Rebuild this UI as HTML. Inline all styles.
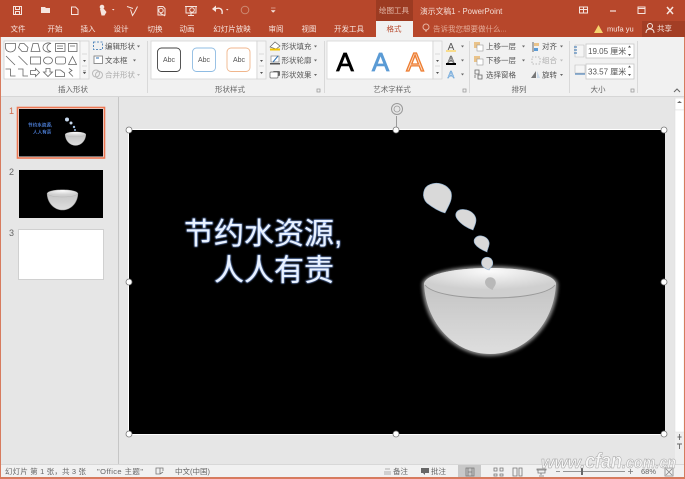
<!DOCTYPE html>
<html lang="zh"><head><meta charset="utf-8"><title>PowerPoint</title>
<style>
html,body{margin:0;padding:0;width:685px;height:479px;overflow:hidden;background:#e6e6e6}
svg{display:block;font-family:"Liberation Sans","Noto Sans CJK SC",sans-serif}
.tab{font-size:7.5px;fill:#f7e6e0;text-anchor:middle}
.r{font-size:7.5px;fill:#555}
.g{font-size:7.5px;fill:#666;text-anchor:middle}
.s{font-size:7.5px;fill:#666}
.i{fill:none;stroke:#666;stroke-width:.8}
.ic{fill:none;stroke:#f6e5df;stroke-width:1}
.wm{font-family:"Liberation Sans",sans-serif;font-style:italic;font-weight:bold;fill:#f6f6f6;stroke:#a0a0a0;stroke-width:.5}
</style></head><body>
<svg width="685" height="479" viewBox="0 0 685 479" xmlns="http://www.w3.org/2000/svg">
<defs>
<linearGradient id="bowl" x1="0" y1="0" x2="0" y2="1"><stop offset="0" stop-color="#bdbdbd"/><stop offset=".35" stop-color="#c9c9c9"/><stop offset="1" stop-color="#dedede"/></linearGradient>
<radialGradient id="rim" cx=".5" cy=".1" r=".62"><stop offset="0" stop-color="#fbfbfb"/><stop offset="1" stop-color="#cfcfcf"/></radialGradient>
<filter id="gl" x="-20%" y="-20%" width="140%" height="140%"><feGaussianBlur stdDeviation="1.5"/></filter>
<filter id="tg" x="-10%" y="-20%" width="120%" height="140%"><feGaussianBlur stdDeviation=".8"/></filter>
<g id="bw">
<path d="M-68 0C-67-11-35-18 0-18S67-11 68 0C67 42 35 72 0 72S-67 42-68 0Z" fill="#8a8a8a" filter="url(#gl)"/>
<path d="M-66 0C-65-10-35-16 0-16S65-10 66 0C64 40 35 70 0 70S-64 40-66 0Z" fill="url(#bowl)"/>
<path d="M-66 0C-65-10-35-16 0-16S65-10 66 0C58 10 30 14 0 14S-58 10-66 0Z" fill="url(#rim)"/>
<path d="M-65 1C-58 10-30 14 0 14S58 10 65 1" fill="none" stroke="#9a9a9a" stroke-width="1"/>
</g>
</defs>

<!-- title bar -->
<rect width="685" height="37" fill="#b7472b"/>
<rect x="376" y="0" width="37" height="21" fill="#9c3b22"/>
<path d="M376 21h37v16h-37z" fill="#f1f1f1"/>
<rect x="642" y="21" width="43" height="16" fill="#a33e25"/>

<!-- quick access icons -->
<path class="ic" d="M13.500 6.500h8v8h-8zM15.500 6.500v3h4v-3M15.500 14.500v-3h4v3"/>
<path d="M41 7h4l1 1h4v5H41z" fill="#f6e5df"/>
<path class="ic" d="M71.500 7h4l2.500 2.500V14.500h-6.500z"/>
<circle cx="102" cy="7" r="2.300" fill="#f6e5df"/><path d="M100 9h4l2.500 3-2 3.500h-3z" fill="#f6e5df"/><path d="M112 9h2.500l-1.250 1.500z" fill="#f6e5df"/>
<path class="ic" d="M127 6.500l6 2M137.500 6.500l-3 6-2 3-2-6"/>
<path class="ic" d="M158 6.500h5l2 2v6.500h-7zM160 13l5 3"/><circle cx="161" cy="10.500" r="2.200" fill="none" stroke="#f6e5df"/>
<path class="ic" d="M185 6.500h12M186 7v6h10V7M191 13v2M188 15.500h6"/><circle cx="192" cy="10" r="2.300" fill="none" stroke="#f6e5df"/>
<path d="M215 9c5-2 8 0 7 5" fill="none" stroke="#f6e5df" stroke-width="1.400"/><path d="M212 9l4-3.500v6.500z" fill="#f6e5df"/><path d="M226 9h2.500l-1.250 1.500z" fill="#f6e5df"/>
<circle cx="245" cy="10" r="3.800" fill="none" stroke="#cc8a73"/>
<path d="M271 8h4.500M271.200 10.500h4l-2 2z" fill="#f6e5df" stroke="#f6e5df" stroke-width=".5"/>
<text x="394" y="13" class="tab" style="fill:#e3b9aa">绘图工具</text>
<text x="420" y="14" style="font-size:7.800px;fill:#f3dcd4">演示文稿1 - PowerPoint</text>
<path class="ic" d="M579.500 7h8v6h-8zM583.500 7v6M579.500 9.500h8"/>
<path d="M610 11h6" stroke="#f6e5df" stroke-width="1.200"/>
<path class="ic" d="M638 7h7v6.500h-7zM638 8.500h7"/>
<path d="M667 7l6 7M673 7l-6 7" stroke="#f6e5df" stroke-width="1.500"/>

<!-- tabs -->
<text x="18" y="31.500" class="tab">文件</text><text x="55" y="31.500" class="tab">开始</text><text x="88" y="31.500" class="tab">插入</text>
<text x="121" y="31.500" class="tab">设计</text><text x="155" y="31.500" class="tab">切换</text><text x="187" y="31.500" class="tab">动画</text>
<text x="232" y="31.500" class="tab">幻灯片放映</text><text x="276" y="31.500" class="tab">审阅</text><text x="309" y="31.500" class="tab">视图</text>
<text x="349" y="31.500" class="tab">开发工具</text>
<text x="394" y="31.500" class="tab" style="fill:#b7472b">格式</text>
<circle cx="426" cy="27" r="3" fill="none" stroke="#e7b5a3"/><path d="M425 31h2" stroke="#e7b5a3"/>
<text x="433" y="31.500" style="font-size:7.500px;fill:#e5ad9a">告诉我您想要做什么...</text>
<path d="M594 33l4.500-8 4.500 8z" fill="#f5d36e"/>
<text x="607" y="31.500" style="font-size:7.500px;fill:#f7e6e0">mufa yu</text>
<circle cx="650" cy="26" r="2.500" fill="none" stroke="#f6e5df"/><path d="M646 33c0-3 2-4 4-4s4 1 4 4" fill="none" stroke="#f6e5df"/>
<text x="657" y="31" style="font-size:7.500px;fill:#f7e6e0">共享</text>

<!-- ribbon -->
<rect x="0" y="37" width="685" height="59" fill="#f1f1f1"/>
<rect x="0" y="96" width="685" height="1" fill="#d6d6d6"/>
<g fill="#d9d9d9"><rect x="147" y="41" width="1" height="52"/><rect x="324" y="41" width="1" height="52"/><rect x="469" y="41" width="1" height="52"/><rect x="569" y="41" width="1" height="52"/><rect x="637" y="41" width="1" height="52"/></g>

<!-- shapes gallery -->
<rect x="4" y="41" width="76" height="38" fill="#fff" stroke="#cfcfcf" stroke-width=".8"/>
<rect x="80" y="41" width="9" height="38" fill="#f6f6f6" stroke="#cfcfcf" stroke-width=".7"/>
<path d="M82 54h5M82 66h5" stroke="#cfcfcf" stroke-width=".7"/><path d="M83 60h3l-1.500 2z" fill="#555"/>
<path d="M83 72h3l-1.500 2z M83 70.500h3" fill="#555" stroke="#555" stroke-width=".3"/>
<g class="i">
<path d="M5.500 43.500h10v4a5 4.500 0 01-10 0z"/><path d="M20 43.500l4 0 4 4-1 4-5 0-3.500-4z"/><path d="M31 51.500l2-8h5l2 8z"/><path d="M51 43.500a5.500 4.500 0 100 8 4 4 0 010-8z"/>
<rect x="55.500" y="43.500" width="9.500" height="8"/><rect x="68.500" y="43.500" width="8.500" height="8"/><path d="M57 46h6M57 48.500h6M70 46h5"/>
<path d="M6 56l9 9"/><path d="M18.500 56l9 9"/><rect x="30.500" y="57" width="10" height="7"/><ellipse cx="48" cy="60.500" rx="4.500" ry="3.500"/><rect x="55.500" y="57" width="10" height="7" rx="2"/><path d="M68.500 64.500l4-8 4 8z"/>
<path d="M5.500 69h5v7h5"/><path d="M18 69h5v7h5"/><path d="M30.500 70.500h5v-2l4 4-4 4v-2h-5z"/><path d="M46 68.500h4v3.500h2.500l-4.500 4.500-4.500-4.500h2.500z"/><path d="M55.500 70h5l4 3v3.500h-9z"/><path d="M69 68.500l3 2-3 2 4 4"/>
</g>
<rect x="93.500" y="42" width="9" height="7.500" fill="none" stroke="#2f6fb0" stroke-width=".8" stroke-dasharray="2 1.500"/>
<text x="105" y="49" class="r">编辑形状</text><path d="M137 45.500h3l-1.500 2z" fill="#666"/>
<rect x="94" y="56" width="8.500" height="7.500" fill="#fff" stroke="#777" stroke-width=".8"/><path d="M96 58h3" stroke="#2f6fb0"/>
<text x="105" y="63" class="r">文本框</text><path d="M133 59.500h3l-1.500 2z" fill="#666"/>
<circle cx="96" cy="73.500" r="3.500" fill="none" stroke="#bbb"/><circle cx="99" cy="75" r="3.500" fill="none" stroke="#bbb"/>
<text x="105" y="77.500" class="r" style="fill:#aaa">合并形状</text><path d="M137 74h3l-1.500 2z" fill="#bbb"/>
<text x="73" y="92" class="g">插入形状</text>

<!-- shape styles -->
<rect x="151" y="41" width="106" height="38" fill="#fff" stroke="#d5d5d5" stroke-width=".8"/>
<rect x="157.500" y="48" width="23" height="23.500" rx="4" fill="#fff" stroke="#444" stroke-width=".9"/>
<rect x="192.500" y="48" width="23" height="23.500" rx="4" fill="#fff" stroke="#8fbce3" stroke-width=".9"/>
<rect x="227" y="48" width="23" height="23.500" rx="4" fill="#fff" stroke="#f0b68c" stroke-width=".9"/>
<g style="font-size:7px;fill:#555;text-anchor:middle"><text x="169" y="62">Abc</text><text x="204" y="62">Abc</text><text x="239" y="62">Abc</text></g>
<rect x="257" y="41" width="9" height="38" fill="#f6f6f6" stroke="#cfcfcf" stroke-width=".7"/>
<path d="M259 54h5M259 66h5" stroke="#cfcfcf" stroke-width=".7"/><path d="M260 60h3l-1.500 2z M260 72h3l-1.500 2z" fill="#555"/>
<path d="M270 47l5-5 5 4-4 3z" fill="#fff" stroke="#666" stroke-width=".7"/><rect x="270" y="48.500" width="10" height="2" fill="#f3c300"/>
<text x="281.500" y="49" class="r">形状填充</text><path d="M314 45.500h3l-1.500 2z" fill="#666"/>
<path d="M271 56h8v6h-8z" fill="#fff" stroke="#888" stroke-width=".7"/><path d="M273 62l5-6" stroke="#2f6fb0"/><rect x="270" y="63" width="10" height="1.500" fill="#555"/>
<text x="281.500" y="63" class="r">形状轮廓</text><path d="M314 59.500h3l-1.500 2z" fill="#666"/>
<rect x="273" y="71" width="7" height="5" rx="1" fill="#666"/><rect x="270" y="72" width="8" height="6" rx="1" fill="#fff" stroke="#666" stroke-width=".7"/>
<text x="281.500" y="77.500" class="r">形状效果</text><path d="M314 74h3l-1.500 2z" fill="#666"/>
<text x="230" y="92" class="g">形状样式</text>
<path class="i" d="M317 89h3v3h-3z" style="stroke:#999"/>

<!-- word art -->
<rect x="327" y="41" width="106" height="38" fill="#fff" stroke="#d5d5d5" stroke-width=".8"/>
<text x="345" y="71" style="font-size:26px;fill:#000;stroke:#000;stroke-width:.8;text-anchor:middle">A</text>
<text x="380.500" y="71" style="font-size:26px;fill:#5b9bd5;stroke:#5b9bd5;stroke-width:.8;text-anchor:middle">A</text>
<text x="415" y="71" style="font-size:26px;fill:#fbd9c2;stroke:#ed7d31;stroke-width:1.300;text-anchor:middle">A</text>
<rect x="433" y="41" width="9" height="38" fill="#f6f6f6" stroke="#cfcfcf" stroke-width=".7"/>
<path d="M435 54h5M435 66h5" stroke="#cfcfcf" stroke-width=".7"/><path d="M436 60h3l-1.500 2z M436 72h3l-1.500 2z" fill="#555"/>
<text x="451" y="50" style="font-size:10px;fill:#555;text-anchor:middle">A</text><rect x="446" y="50" width="10" height="2" fill="#f8dc8c"/><path d="M461 45.500h3l-1.500 2z" fill="#666"/>
<text x="451" y="63" style="font-size:10px;fill:#fff;stroke:#555;stroke-width:.6;text-anchor:middle">A</text><rect x="446" y="63" width="10" height="2" fill="#000"/><path d="M461 59.500h3l-1.500 2z" fill="#666"/>
<text x="451" y="78" style="font-size:10px;fill:#cfe2f3;stroke:#5b9bd5;stroke-width:.5;text-anchor:middle">A</text><path d="M461 73.500h3l-1.500 2z" fill="#666"/>
<text x="392" y="92" class="g">艺术字样式</text>
<path class="i" d="M463 89h3v3h-3z" style="stroke:#999"/>

<!-- arrange -->
<rect x="474" y="42" width="6" height="6" fill="#eac38a"/><rect x="477" y="45" width="6" height="6" fill="#fff" stroke="#999" stroke-width=".6"/>
<text x="486" y="49" class="r">上移一层</text><path d="M522 45.500h3l-1.500 2z" fill="#666"/>
<rect x="474" y="56" width="6" height="6" fill="#eac38a"/><rect x="477" y="59" width="6" height="6" fill="#fff" stroke="#999" stroke-width=".6"/>
<text x="486" y="63" class="r">下移一层</text><path d="M522 59.500h3l-1.500 2z" fill="#666"/>
<path class="i" d="M475 70h4v4h-4zM478 75h4v4h-4zM475 75v3"/>
<text x="486" y="77.500" class="r">选择窗格</text>
<path d="M533 42v10" stroke="#666"/><rect x="534" y="43" width="5" height="3" fill="#eac38a"/><rect x="534" y="48" width="4" height="3" fill="#5b9bd5"/>
<text x="542" y="49" class="r">对齐</text><path d="M560 45.500h3l-1.500 2z" fill="#666"/>
<path d="M532 57h8v7h-8z" fill="none" stroke="#aaa" stroke-width=".8" stroke-dasharray="1.500 1.500"/>
<text x="542" y="63" class="r" style="fill:#aaa">组合</text><path d="M560 59.500h3l-1.500 2z" fill="#bbb"/>
<path d="M531 78l5-7v7z" fill="#777"/><path d="M537 71l3 7h-3z" fill="#c8d8e8"/>
<text x="542" y="77.500" class="r">旋转</text><path d="M560 74h3l-1.500 2z" fill="#666"/>
<text x="519" y="92" class="g">排列</text>

<!-- size -->
<path d="M575 45h9v12h-9z" fill="#f5f5f5" stroke="#bbb" stroke-width=".6"/><path d="M574 47h3M574 50h3M574 53h3" stroke="#2f6fb0"/>
<rect x="586" y="44" width="48" height="14" fill="#fff" stroke="#c6c6c6" stroke-width=".8"/>
<text x="588" y="54" class="r" style="font-size:8px">19.05 厘米</text><path d="M628 47.500h3l-1.500-2zM628 54h3l-1.500 2z" fill="#555"/>
<path d="M575 65h10v8h-10z" fill="#f5f5f5" stroke="#bbb" stroke-width=".6"/><path d="M575 74h10" stroke="#2f6fb0"/>
<rect x="586" y="64" width="48" height="15" fill="#fff" stroke="#c6c6c6" stroke-width=".8"/>
<text x="588" y="74.500" class="r" style="font-size:8px">33.57 厘米</text><path d="M628 67.500h3l-1.500-2zM628 74h3l-1.500 2z" fill="#555"/>
<text x="598" y="92" class="g">大小</text>
<path class="i" d="M631 89h3v3h-3z" style="stroke:#999"/>
<path d="M674 92l3-3 3 3" fill="none" stroke="#666"/>

<!-- left pane -->
<rect x="0" y="97" width="118" height="368" fill="#e6e6e6"/>
<rect x="118" y="97" width="1" height="368" fill="#c6c6c6"/>
<text x="9" y="114" style="font-size:9px;fill:#d2694a">1</text>
<text x="9" y="175" style="font-size:9px;fill:#666">2</text>
<text x="9" y="236" style="font-size:9px;fill:#666">3</text>
<rect x="17.500" y="107.500" width="87" height="50.500" fill="none" stroke="#ee7752" stroke-width="1.600"/>
<rect x="19" y="109" width="84" height="47.500" fill="#000"/>
<text x="28" y="126.500" style="font-size:4.600px;fill:#4c7ed6;font-weight:bold">节约水资源,</text>
<text x="33" y="133.500" style="font-size:4.600px;fill:#4c7ed6;font-weight:bold">人人有责</text>
<circle cx="67" cy="119.500" r="2" fill="#c7d9ee"/><circle cx="71" cy="123" r="1.500" fill="#c7d9ee"/><circle cx="74" cy="127" r="1.200" fill="#9dbce0"/><circle cx="75" cy="130" r="1" fill="#9dbce0"/>
<use href="#bw" transform="translate(75.500,134.500) scale(.155)"/>
<rect x="19" y="170" width="84" height="48" fill="#000"/>
<use href="#bw" transform="translate(62.500,193.700) scale(.23)"/>
<rect x="18.500" y="229.500" width="85" height="50" fill="#fff" stroke="#d0d0d0"/>

<!-- slide -->
<rect x="128" y="129" width="537" height="306" fill="#fff"/>
<rect x="129" y="130" width="536" height="304" fill="#000"/>
<g style="font-size:30px">
<g fill="#8db4ff" stroke="#8db4ff" stroke-width=".8" filter="url(#tg)"><text x="184" y="244">节约水资源,</text><text x="214" y="280.500">人人有责</text></g>
<g fill="#e9f2ff"><text x="184" y="244">节约水资源,</text><text x="214" y="280.500">人人有责</text></g>
</g>
<use href="#bw" transform="translate(490,284)"/>
<g fill="#d9d9d9" stroke="#8fb0d0" stroke-width=".6">
<path d="M445 213C438 211 432 207 427 203C421 197 423 187 430 184.500C438 181 448 185 451 192C453 199 449 205 445 213Z"/>
<path d="M473 230C467 228 461 224 458 220C453 214 457 209 464 209.500C471 210 476 215 476 220C476 224 474 227 473 230Z"/>
<path d="M487 252C482 250 477 247 475 244C472 239 477 235 482 236C487 237 490 241 489 245C488.500 248 487 250 487 252Z"/>
<path d="M489 270C485 269 481 266 481.500 262C482 258 486 256.500 489 257.500C492 258.500 493.500 262 492.500 265C491.500 267 490 268 489 270Z"/>
</g>
<path d="M492.700 290C489 288.500 485 286 485 282C485.500 278 489 276.500 492 277.500C495 278.500 496.500 281.500 495.500 284.500C494.500 287 493 288 492.700 290Z" fill="#b8b8b8"/>

<!-- handles -->
<g fill="#fff" stroke="#777" stroke-width=".8">
<circle cx="129" cy="130" r="3"/><circle cx="396" cy="130" r="3"/><circle cx="664" cy="130" r="3"/>
<circle cx="129" cy="282" r="3"/><circle cx="664" cy="282" r="3"/>
<circle cx="129" cy="434" r="3"/><circle cx="396" cy="434" r="3"/><circle cx="664" cy="434" r="3"/>
</g>
<path d="M396.500 116v11" stroke="#888" stroke-width=".8"/>
<circle cx="397" cy="109" r="5.500" fill="none" stroke="#999" stroke-width="1"/>
<circle cx="397" cy="109" r="3" fill="none" stroke="#999" stroke-width=".8"/>

<!-- scrollbar -->
<rect x="675" y="97" width="9" height="368" fill="#eeeeee"/>
<rect x="675" y="98" width="9" height="12" fill="#fff" stroke="#d8d8d8" stroke-width=".6"/>
<path d="M677 103h5l-2.500-2z" fill="#666"/>
<rect x="675" y="110" width="9" height="322" fill="#fff" stroke="#dedede" stroke-width=".5"/>
<path d="M677.500 437h4M679.500 434v6" stroke="#666" stroke-width=".9"/>
<path d="M677 444h5M679.500 444v5" stroke="#666" stroke-width=".9"/>

<!-- status -->
<rect x="0" y="464" width="685" height="1" fill="#d8d8d8"/>
<rect x="0" y="465" width="685" height="12" fill="#f1f1f1"/>
<rect x="458" y="465" width="23" height="12" fill="#c8c8c8"/>
<text x="5" y="474" class="s" textLength="81" lengthAdjust="spacing">幻灯片 第 1 张，共 3 张</text>
<text x="97" y="474" class="s" textLength="46" lengthAdjust="spacing">"Office 主题"</text>
<path class="i" d="M156 468h4v6h-4zM160 468h3v3M160 474l3-2" style="stroke:#777"/>
<text x="175" y="474" class="s">中文(中国)</text>
<path d="M385 469h5M384 472h7M384 474h7" stroke="#999" stroke-width=".7"/>
<text x="393" y="474" class="s">备注</text>
<path d="M421 468h8v5h-4v2l-2-2h-2z" fill="#666"/>
<text x="431" y="474" class="s">批注</text>
<path class="i" d="M466 468h8v8h-8zM468 468v8M472 468v8M468 472h4" style="stroke:#777"/>
<path class="i" d="M494 468h3v3h-3zM500 468h3v3h-3zM494 474h3v2h-3zM500 474h3v2h-3z" style="stroke:#777"/>
<path class="i" d="M513 468h4v8h-4zM519 468h3v8h-3z" style="stroke:#777"/>
<path class="i" d="M537 469h9v1h-9zM538 470h7v3h-7zM541 473v2M539 476h5" style="stroke:#777"/>
<path d="M556 471.500h4M563 471.500h62M628 471.500h5M630.500 469v5" stroke="#777" stroke-width=".8"/>
<rect x="581" y="468" width="2" height="7" fill="#666"/>
<text x="641" y="474" class="s">68%</text>
<path class="i" d="M665 468h8v8h-8zM666 469l6 6M672 469l-6 6" style="stroke:#888"/>

<!-- watermark -->
<text x="541" y="468" class="wm" style="font-size:17px" textLength="44" lengthAdjust="spacingAndGlyphs">www.</text>
<text x="585" y="468" class="wm" style="font-size:21px" textLength="37" lengthAdjust="spacingAndGlyphs">cfan</text>
<text x="622" y="468" class="wm" style="font-size:17px" textLength="54" lengthAdjust="spacingAndGlyphs">.com.cn</text>

<!-- window edge -->
<rect x="0" y="37" width="1" height="442" fill="#d77b5e"/>
<rect x="684" y="37" width="1" height="442" fill="#d77b5e"/>
<rect x="0" y="477" width="685" height="2" fill="#d77b5e"/>
</svg>
</body></html>
